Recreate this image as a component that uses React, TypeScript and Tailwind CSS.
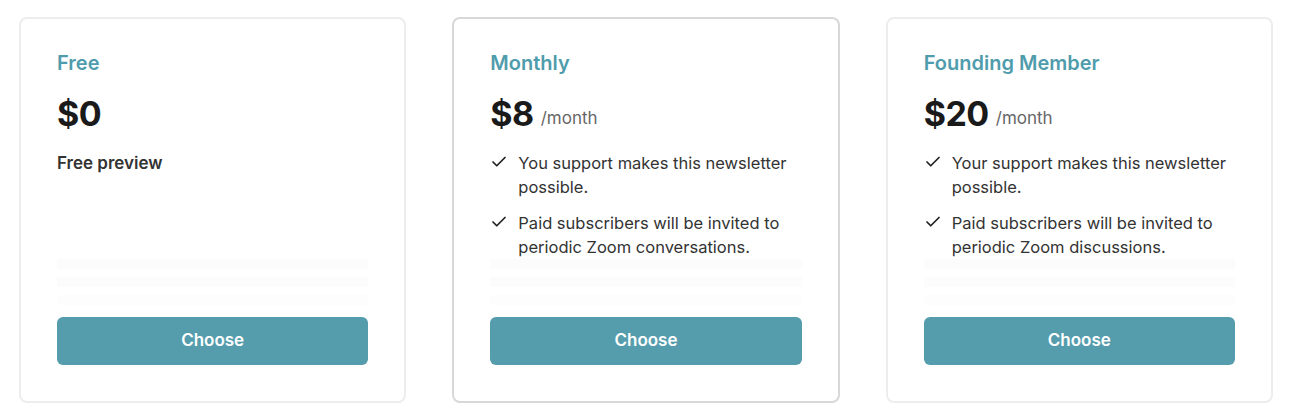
import { Check } from "lucide-react";

type Plan = {
  name: string;
  price: string;
  period?: string;
  summary?: string;
  features: string[];
  selected?: boolean;
};

const plans: Plan[] = [
  { name: "Free", price: "$0", summary: "Free preview", features: [] },
  {
    name: "Monthly",
    price: "$8",
    period: "/month",
    features: [
      "You support makes this newsletter possible.",
      "Paid subscribers will be invited to periodic Zoom conversations.",
    ],
    selected: true,
  },
  {
    name: "Founding Member",
    price: "$20",
    period: "/month",
    features: [
      "Your support makes this newsletter possible.",
      "Paid subscribers will be invited to periodic Zoom discussions.",
    ],
  },
];

function PlanCard({ plan }: { plan: Plan }) {
  return (
    <div
      className={`flex h-[386px] flex-col rounded-lg border-2 bg-white px-[36px] pb-[36px] pt-[30px] ${
        plan.selected ? "border-[#d8d8d8]" : "border-[#ededed]"
      }`}
    >
      <h3 className="text-[20px] font-semibold leading-[28px] text-[#4f9cac]">{plan.name}</h3>
      <div className="mt-[17px] flex h-[40px] items-baseline gap-[7px]">
        <span className="text-[34px] font-bold leading-[40px] tracking-[-0.5px] text-[#1a1a1a]">{plan.price}</span>
        {plan.period && (
          <span className="relative top-[-2px] text-[17px] leading-none text-[#666]">{plan.period}</span>
        )}
      </div>
      {/* feature area, with the faint fade stripes behind it */}
      <div className="relative mt-[17px] flex-1">
        <div className="absolute inset-x-0 bottom-[12px] flex flex-col gap-[8px]">
          <div className="h-[10px] bg-[#fcfcfc]" />
          <div className="h-[10px] bg-[#fcfcfc]" />
          <div className="h-[10px] bg-[#fdfdfd]" />
        </div>
        <div className="relative">
          {plan.summary && (
            <p className="text-[17px] font-semibold leading-[24px] text-[#333]">{plan.summary}</p>
          )}
          <ul className="flex flex-col gap-[12px]">
            {plan.features.map((f) => (
              <li key={f} className="flex gap-[10px] text-[16.5px] leading-[24px] text-[#333]">
                <Check className="mt-[2px] h-[18px] w-[18px] shrink-0 text-[#222]" strokeWidth={2.3} />
                <span>{f}</span>
              </li>
            ))}
          </ul>
        </div>
      </div>
      <button
        type="button"
        className="h-[48px] w-full rounded-md bg-[#559dad] text-[17px] font-semibold text-white"
      >
        Choose
      </button>
    </div>
  );
}

export default function App() {
  return (
    <div className="min-h-[418px] bg-white font-['Inter',sans-serif]">
      <div className="grid grid-cols-3 gap-[46px] px-[19px] pt-[17px]">
        {plans.map((p) => (
          <PlanCard key={p.name} plan={p} />
        ))}
      </div>
    </div>
  );
}
